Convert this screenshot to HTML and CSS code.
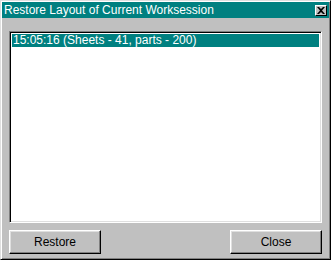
FILE: index.html
```html
<!DOCTYPE html>
<html lang="en">
<head>
    <meta charset="UTF-8">
    <title>Restore Layout of Current Worksession</title>
    <link rel="stylesheet" href="styles.css">
</head>
<body>
    <div class="window">
        <div class="title-bar">
            <span class="title">Restore Layout of Current Worksession</span>
            <span class="close-box">
                <svg width="8" height="7" viewBox="0 0 8 7">
                    <path d="M0 0h2l2 2 2-2h2L5 3.5 8 7H6L4 5 2 7H0l3-3.5z" fill="#000"/>
                </svg>
            </span>
        </div>

        <div class="content">
            <div class="listbox">
                <div class="item selected">15:05:16 (Sheets - 41, parts - 200)</div>
            </div>

            <div class="buttons">
                <button>Restore</button>
                <button>Close</button>
            </div>
        </div>
    </div>
</body>
</html>
```

FILE: styles.css
```css
:root {
    --face: #c0c0c0;
    --teal: #008080;
    --shadow: #808080;
    --dark: #000000;
    --light: #ffffff;
}

html, body {
    margin: 0;
    padding: 0;
}

body {
    width: 331px;
    height: 260px;
    font-family: 'Liberation Sans', Arial, sans-serif;
    font-size: 12px;
}

.window {
    box-sizing: border-box;
    width: 331px;
    height: 260px;
    background-color: var(--face);
    border-top: 1px solid #dfdfdf;
    border-left: 1px solid #dfdfdf;
    border-right: 1px solid var(--dark);
    border-bottom: 1px solid var(--dark);
    box-shadow: inset 1px 1px 0 var(--light), inset -1px -1px 0 var(--shadow);
    padding: 1px;
    display: flex;
    flex-direction: column;
}

.title-bar {
    height: 16px;
    background-color: var(--teal);
    color: #ffffff;
    display: flex;
    align-items: center;
    justify-content: space-between;
    padding: 0 2px 0 2px;
}

.title {
    line-height: 16px;
}

.close-box {
    box-sizing: border-box;
    width: 12px;
    height: 11px;
    background-color: var(--face);
    border-top: 1px solid var(--light);
    border-left: 1px solid var(--light);
    border-right: 1px solid var(--dark);
    border-bottom: 1px solid var(--dark);
    display: flex;
    align-items: center;
    justify-content: center;
}

.content {
    display: flex;
    flex-direction: column;
    padding: 13px 7px 0 7px;
}

.listbox {
    box-sizing: border-box;
    height: 192px;
    background-color: #ffffff;
    border-top: 1px solid var(--shadow);
    border-left: 1px solid var(--shadow);
    border-right: 1px solid var(--light);
    border-bottom: 1px solid var(--light);
    box-shadow: inset 1px 1px 0 var(--dark), inset -1px -1px 0 #dfdfdf;
    padding: 2px;
}

.item {
    height: 13px;
    line-height: 13px;
    padding-left: 1px;
}

.item.selected {
    background-color: var(--teal);
    color: #ffffff;
}

.buttons {
    display: flex;
    justify-content: space-between;
    margin-top: 7px;
}

button {
    box-sizing: border-box;
    width: 92px;
    height: 24px;
    background-color: var(--face);
    font-family: inherit;
    font-size: 12px;
    color: #000000;
    border-top: 1px solid var(--light);
    border-left: 1px solid var(--light);
    border-right: 1px solid var(--dark);
    border-bottom: 1px solid var(--dark);
    box-shadow: inset -1px -1px 0 var(--shadow), inset 1px 1px 0 #dfdfdf;
    padding: 0;
}
```
